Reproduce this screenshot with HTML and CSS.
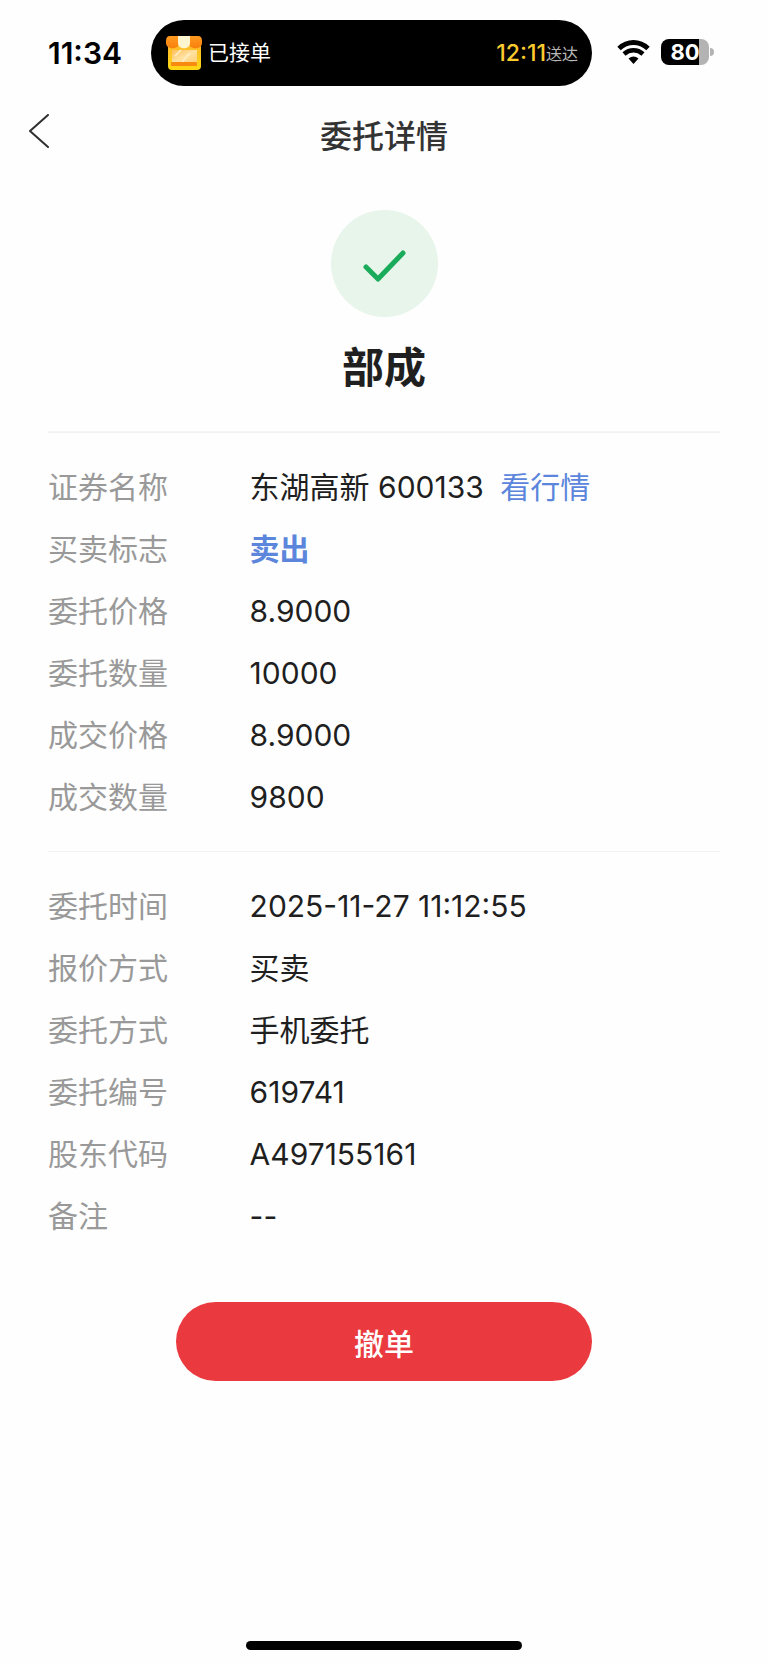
FILE: index.html
```html
<!DOCTYPE html>
<html lang="zh-CN">
<head>
    <meta charset="UTF-8">
    <meta name="viewport" content="width=device-width, initial-scale=1.0">
    <title>委托详情</title>
    <link rel="stylesheet" href="styles.css">
</head>
<body>
    <div class="status-bar">
        <span class="time">11:34</span>
        <div class="island">
            <svg class="shop-icon" viewBox="0 0 36 34" aria-hidden="true">
                <defs>
                    <linearGradient id="awning" x1="0" y1="0" x2="0" y2="1">
                        <stop offset="0" stop-color="#ff9a1f"/>
                        <stop offset="1" stop-color="#f97f0c"/>
                    </linearGradient>
                    <linearGradient id="box" x1="0" y1="0" x2="0" y2="1">
                        <stop offset="0" stop-color="#ffb52e"/>
                        <stop offset="1" stop-color="#ffd814"/>
                    </linearGradient>
                    <linearGradient id="pane" x1="0" y1="0" x2="1" y2="1">
                        <stop offset="0" stop-color="#ffbe5c"/>
                        <stop offset="0.5" stop-color="#ffe2a0"/>
                        <stop offset="1" stop-color="#ffcf78"/>
                    </linearGradient>
                </defs>
                <rect x="2" y="5" width="33" height="29" rx="4" fill="url(#box)"/>
                <rect x="6" y="14" width="25" height="13" fill="url(#pane)"/>
                <path d="M9 20L15 14M16 26L24 17" stroke="#fff0cc" stroke-width="1.5"/>
                <rect x="5" y="26" width="26" height="4" rx="1" fill="#f98a10"/>
                <path d="M4 0H13V7C13 14 0 14 0 7V5Q0 0 4 0Z" fill="url(#awning)"/>
                <path d="M23 0H32Q36 0 36 5V7C36 14 23 14 23 7Z" fill="url(#awning)"/>
                <path d="M12 0H24V7C24 14 12 14 12 7Z" fill="#fff6cf"/>
            </svg>
            <span class="order-state">已接单</span>
            <span class="arrival"><b>12:11</b>送达</span>
        </div>
        <svg class="wifi" viewBox="0 0 33 24" aria-hidden="true">
            <path d="M2 8.5C10.5 0.5 22.5 0.5 31 8.5" fill="none" stroke="#000" stroke-width="5"/>
            <path d="M7 14C12.5 9 20.5 9 26 14" fill="none" stroke="#000" stroke-width="4.5"/>
            <path d="M11.5 18.5Q16.5 14.5 21.5 18.5L16.5 24Z"/>
        </svg>
        <div class="battery">
            <span class="battery-level">80</span>
        </div>
    </div>

    <header class="nav">
        <button class="back" type="button" aria-label="返回">
            <svg viewBox="0 0 20 34" aria-hidden="true">
                <path d="M19 1L1 17L19 33"/>
            </svg>
        </button>
        <h1>委托详情</h1>
    </header>

    <main class="content">
        <section class="result">
            <div class="result-icon">
                <svg viewBox="0 0 44 32" aria-hidden="true">
                    <path d="M4 17L16 29L41 3"/>
                </svg>
            </div>
            <h2>部成</h2>
        </section>

        <dl class="details">
            <div class="row"><dt>证券名称</dt><dd>东湖高新 600133 <a class="quote" href="#">看行情</a></dd></div>
            <div class="row"><dt>买卖标志</dt><dd class="sell">卖出</dd></div>
            <div class="row"><dt>委托价格</dt><dd>8.9000</dd></div>
            <div class="row"><dt>委托数量</dt><dd>10000</dd></div>
            <div class="row"><dt>成交价格</dt><dd>8.9000</dd></div>
            <div class="row"><dt>成交数量</dt><dd>9800</dd></div>
        </dl>

        <dl class="details">
            <div class="row"><dt>委托时间</dt><dd>2025-11-27 11:12:55</dd></div>
            <div class="row"><dt>报价方式</dt><dd>买卖</dd></div>
            <div class="row"><dt>委托方式</dt><dd>手机委托</dd></div>
            <div class="row"><dt>委托编号</dt><dd>619741</dd></div>
            <div class="row"><dt>股东代码</dt><dd>A497155161</dd></div>
            <div class="row"><dt>备注</dt><dd>--</dd></div>
        </dl>

        <button class="cancel" type="button">撤单</button>
    </main>

    <div class="home-indicator"></div>
</body>
</html>
```
FILE: styles.css
```css
* {
    box-sizing: border-box;
}
body {
    font-family: Inter, 'Noto Sans CJK SC', sans-serif;
    background-color: #fefefe;
    color: #1f1f1f;
    margin: 0;
    display: flex;
    flex-direction: column;
    min-height: 100vh;
}
button {
    font-family: inherit;
    border: none;
    padding: 0;
    cursor: pointer;
}

/* Phone status bar */
.status-bar {
    display: flex;
    align-items: center;
    padding: 20px 54px 0 48px;
    color: #000;
}
.time {
    font-size: 30px;
    font-weight: 600;
    line-height: 30px;
    width: 103px;
}
.island {
    flex: 1;
    display: flex;
    align-items: center;
    height: 66px;
    padding: 0 14px 0 15px;
    border-radius: 33px;
    background-color: #000;
}
.shop-icon {
    width: 36px;
    height: 34px;
    margin-right: 6px;
}
.order-state {
    font-size: 21px;
    line-height: 24px;
    color: #fff;
}
.arrival {
    margin-left: auto;
    font-size: 16px;
    color: #b8b8b8;
    display: flex;
    align-items: center;
}
.arrival b {
    font-size: 23px;
    font-weight: 500;
    color: #fccb2e;
}
.wifi {
    width: 33px;
    height: 24px;
    margin: 0 11px 2px 25px;
}
.battery {
    position: relative;
    width: 48px;
    height: 26px;
    margin: 0 5px 2px 0;
    border-radius: 8px;
    background: linear-gradient(to right, #000 80%, #b3b3b3 80%);
    text-align: center;
}
.battery::after {
    content: "";
    position: absolute;
    right: -5px;
    top: 9px;
    width: 4px;
    height: 8px;
    border-radius: 0 4px 4px 0;
    background-color: #b3b3b3;
}
.battery-level {
    font-size: 22px;
    font-weight: 700;
    line-height: 26px;
    color: #fff;
}

/* Title bar */
.nav {
    display: grid;
    grid-template-columns: 80px 1fr 80px;
    align-items: center;
    height: 96px;
}
.back {
    height: 60px;
    padding-left: 29px;
    margin-bottom: 6px;
    background: none;
    text-align: left;
}
.back svg {
    display: block;
    width: 20px;
    height: 34px;
    fill: none;
    stroke: #2f2f2f;
    stroke-width: 2;
    stroke-linecap: round;
    stroke-linejoin: round;
}
.nav h1 {
    margin: 0;
    font-size: 32px;
    font-weight: 500;
    color: #333;
    text-align: center;
}

.content {
    flex: 1;
    display: flex;
    flex-direction: column;
    padding: 28px 48px 48px;
}

/* Order result */
.result {
    display: flex;
    flex-direction: column;
    align-items: center;
    padding-bottom: 33px;
    border-bottom: 1px solid #f4f4f4;
}
.result-icon {
    display: flex;
    align-items: center;
    justify-content: center;
    width: 107px;
    height: 107px;
    padding-top: 4px;
    border-radius: 50%;
    background-color: #e7f5ea;
}
.result-icon svg {
    width: 44px;
    height: 32px;
    fill: none;
    stroke: #1aab5b;
    stroke-width: 5;
    stroke-linecap: round;
    stroke-linejoin: round;
}
.result h2 {
    margin: 21px 0 0;
    font-size: 42px;
    line-height: 60px;
    font-weight: 700;
}

/* Order details */
.details {
    display: flex;
    flex-direction: column;
    gap: 20px;
    margin: 0;
    padding: 33px 0;
    border-top: 1px solid #f2f2f2;
}
.row {
    display: grid;
    grid-template-columns: 30% 1fr;
    font-size: 30px;
    line-height: 42px;
}
.row dt {
    color: #999;
}
.row dd {
    margin: 0;
}
.row .sell {
    color: #5b86dc;
    font-weight: 700;
}
.quote {
    margin-left: 8px;
    color: #5b86dc;
    text-decoration: none;
}

.cancel {
    align-self: center;
    width: 62%;
    height: 79px;
    margin-top: 32px;
    border-radius: 40px;
    background-color: #ea3a40;
    color: #fff;
    font-size: 30px;
    font-weight: 500;
}

.home-indicator {
    align-self: center;
    width: 36%;
    height: 9px;
    margin-bottom: 15px;
    border-radius: 5px;
    background-color: #000;
}
```
